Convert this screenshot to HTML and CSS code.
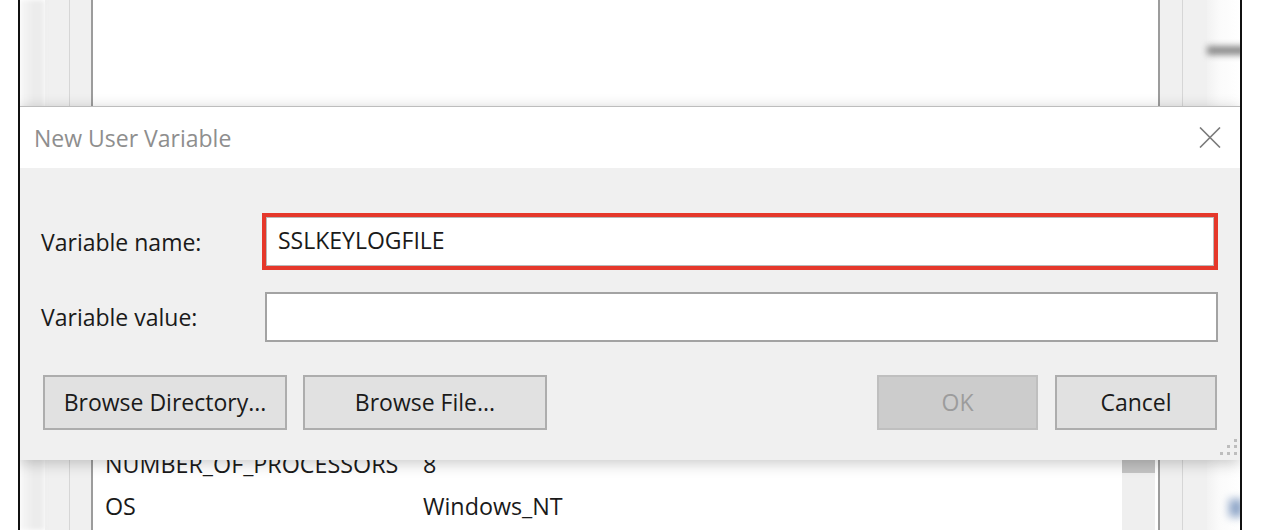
FILE: index.html
```html
<!DOCTYPE html>
<html>
<head>
<meta charset="utf-8">
<link rel="stylesheet" href="styles.css">
</head>
<body>
<div class="frame">
  <div class="bgwin">
    <div class="col blurstrip"></div>
    <div class="col colA"></div>
    <div class="col colB"></div>
    <div class="main">
      <div class="toppane"></div>
      <div class="listpane">
        <div class="rows">
          <div class="row"><span class="c1">NUMBER_OF_PROCESSORS</span><span>8</span></div>
          <div class="row"><span class="c1">OS</span><span>Windows_NT</span></div>
        </div>
        <div class="vscroll"><div class="thumb"></div></div>
        <div class="gapcol"></div>
      </div>
    </div>
    <div class="col colC"></div>
    <div class="col colD"></div>
    <div class="col colE">
      <div class="smear"></div>
      <div class="blueblob"></div>
    </div>
  </div>

  <div class="dialog">
    <div class="titlebar">
      <span class="title">New User Variable</span>
      <svg class="close" width="22" height="21" viewBox="0 0 22 21"><path d="M1 0.5 L21 20.5 M21 0.5 L1 20.5" stroke="#7a7a7a" stroke-width="1.6" fill="none"/></svg>
    </div>
    <div class="body">
      <div class="form">
        <label class="lbl">Variable name:</label>
        <div class="field named">SSLKEYLOGFILE</div>
        <label class="lbl">Variable value:</label>
        <div class="field value"></div>
      </div>
      <div class="buttons">
        <div class="btn browse-dir">Browse Directory...</div>
        <div class="btn browse-file">Browse File...</div>
        <div class="spacer"></div>
        <div class="btn ok disabled">OK</div>
        <div class="btn cancel">Cancel</div>
      </div>
    </div>
    <svg class="grip" width="18" height="18" viewBox="0 0 18 18">
      <rect x="14" y="0" width="3" height="3" fill="#bdbdbd"/>
      <rect x="14" y="6" width="3" height="3" fill="#bdbdbd"/>
      <rect x="7" y="6" width="3" height="3" fill="#bdbdbd"/>
      <rect x="14" y="13" width="3" height="3" fill="#bdbdbd"/>
      <rect x="7" y="13" width="3" height="3" fill="#bdbdbd"/>
      <rect x="0" y="13" width="3" height="3" fill="#bdbdbd"/>
    </svg>
  </div>
</div>
</body>
</html>
```

FILE: styles.css
```css
html, body {
  margin: 0;
  padding: 0;
  background: #ffffff;
  height: 530px;
  overflow: hidden;
  font-family: "Open Sans", "Noto Sans", sans-serif;
}

.frame {
  position: relative;
  margin-left: 18px;
  width: 1220px;
  height: 530px;
  border-left: 2px solid #111;
  border-right: 2px solid #111;
  overflow: hidden;
}

.bgwin {
  display: flex;
  height: 530px;
}

.col { height: 100%; }

.blurstrip {
  width: 25px;
  background: linear-gradient(to right, #f7f7f7, #ebebeb 60%, #eeeeee);
  filter: blur(2px);
}

.colA {
  width: 24px;
  background: #f0f0f0;
  border-right: 1px solid #d6d6d6;
}

.colB {
  width: 21px;
  background: #f0f0f0;
  border-right: 2px solid #9c9c9c;
}

.main {
  width: 1066px;
  display: flex;
  flex-direction: column;
  background: #fff;
}

.toppane {
  height: 380px;
  background: #fff;
}

.listpane {
  flex: 1;
  display: flex;
}

.rows {
  flex: 1;
  padding-top: 63px;
  padding-left: 12px;
  color: #1a1a1a;
  font-size: 23.3px;
}

.row {
  display: flex;
  height: 42px;
  align-items: center;
}

.c1 { width: 318px; }

.vscroll {
  width: 33px;
  background: #efefef;
}

.thumb {
  height: 93px;
  background: #c4c4c4;
}

.gapcol { width: 3px; }

.colC {
  width: 22px;
  border-left: 2px solid #9c9c9c;
  background: #f0f0f0;
  border-right: 1px solid #d6d6d6;
}

.colD {
  width: 24px;
  background: #f0f0f0;
}

.colE {
  width: 33px;
  background: linear-gradient(to right, #f2f2f2, #fbfbfb 40%, #ffffff);
  padding-top: 46px;
  box-sizing: border-box;
}

.smear {
  height: 9px;
  margin-right: -6px;
  background: #8a8a8a;
  filter: blur(3px);
}

.blueblob {
  margin-top: 444px;
  margin-left: 22px;
  width: 14px;
  height: 18px;
  background: #8fa6c8;
  filter: blur(4px);
}

/* dialog */
.dialog {
  position: absolute;
  left: 0;
  top: 106px;
  width: 1220px;
  height: 354px;
  background: #f0f0f0;
  box-shadow: 0 3px 14px rgba(0, 0, 0, 0.22);
  display: flex;
  flex-direction: column;
}

.titlebar {
  height: 61px;
  border-top: 1px solid #bdbdbd;
  background: #fff;
  display: flex;
  align-items: center;
  justify-content: space-between;
  padding-left: 14px;
  padding-right: 19px;
}

.title {
  font-size: 23px;
  color: #8e8e8e;
}

.close { display: block; }

.body {
  flex: 1;
  padding: 45px 22px 0 21px;
  color: #1a1a1a;
  font-size: 23px;
}

.form {
  display: grid;
  grid-template-columns: 224px 1fr;
  grid-template-rows: 57px 50px;
  row-gap: 22px;
  align-items: center;
}

.lbl { display: block; }

.field {
  box-sizing: border-box;
  background: #fff;
  height: 100%;
  display: flex;
  align-items: center;
}

.named {
  margin-left: -3px;
  border: 4px solid #e5382b;
  box-shadow: inset 0 0 0 1px #b9b9b9;
  padding-left: 12px;
  padding-bottom: 3px;
}

.value {
  border: 2px solid #a3a3a3;
}

.buttons {
  display: flex;
  margin-top: 33px;
  margin-left: 2px;
  margin-right: 1px;
}

.btn {
  box-sizing: border-box;
  height: 55px;
  border: 2px solid #adadad;
  background: #e1e1e1;
  display: flex;
  align-items: center;
  justify-content: center;
  padding-bottom: 2px;
}

.browse-dir { width: 244px; }
.browse-file { width: 244px; margin-left: 16px; }
.spacer { flex: 1; }
.ok { width: 161px; }
.cancel { width: 162px; margin-left: 17px; }

.disabled {
  background: #cccccc;
  border-color: #bfbfbf;
  color: #9c9c9c;
}

.grip {
  position: absolute;
  right: 2px;
  bottom: 3px;
}
```
